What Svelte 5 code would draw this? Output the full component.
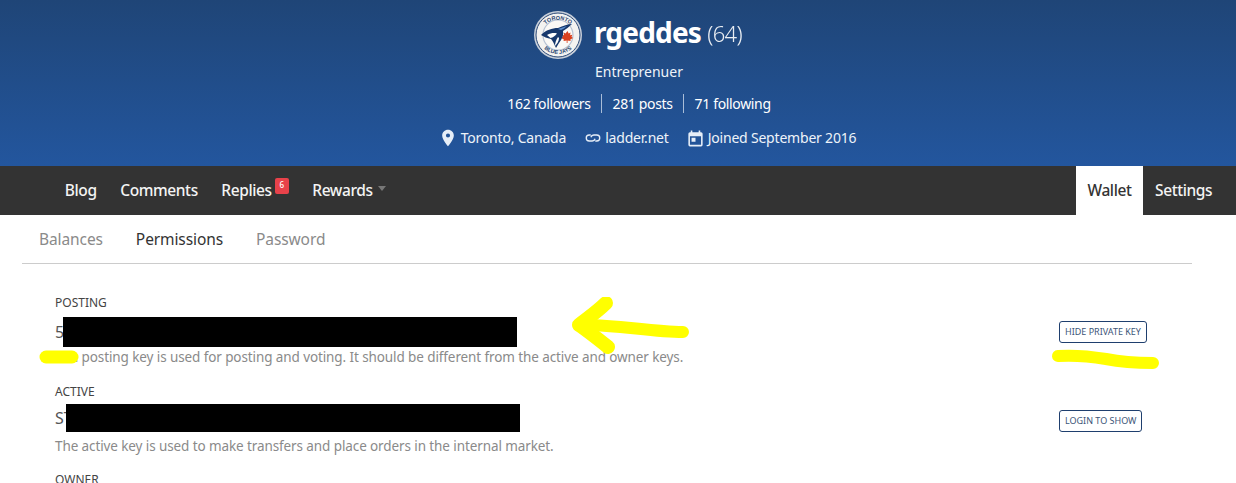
<script>
  const tabs = ['Blog', 'Comments', 'Replies', 'Rewards'];
  const subTabs = ['Balances', 'Permissions', 'Password'];
  const keys = [
    {
      label: 'POSTING',
      prefix: '5',
      desc: 'The posting key is used for posting and voting. It should be different from the active and owner keys.',
      action: 'HIDE PRIVATE KEY'
    },
    {
      label: 'ACTIVE',
      prefix: 'ST',
      desc: 'The active key is used to make transfers and place orders in the internal market.',
      action: 'LOGIN TO SHOW'
    }
  ];
</script>

<div class="page">
  <header class="hero">
    <div class="title">
      <svg class="avatar" viewBox="0 0 48 48" width="48" height="48">
        <defs>
          <path id="arcTop" d="M6.500 26a17.500 17.500 0 0 1 35 0" />
          <path id="arcBottom" d="M4 27a20.500 20.500 0 0 0 40 0" />
        </defs>
        <circle cx="24" cy="24" r="24" fill="#c9d0da" />
        <circle cx="24" cy="24" r="22" fill="#f4f3f1" stroke="#2c4a78" stroke-width="1" />
        <circle cx="24" cy="24" r="15" fill="#fbf9f6" stroke="#b7c2d3" stroke-width="1.200" />
        <text class="ring" fill="#27436f"><textPath href="#arcTop" startOffset="50%" text-anchor="middle">TORONTO</textPath></text>
        <text class="ring" fill="#27436f"><textPath href="#arcBottom" startOffset="50%" text-anchor="middle">BLUE JAYS</textPath></text>
        <path d="M33.500 20l1.200 2.400 1.800-.8-.4 2.600 2.200-.4-.8 2 1.500 1.200-2.700 1.400.4 1.600-3.200-.5v2.500h-.8v-2.500l-3.200.5.400-1.600-2.700-1.400 1.500-1.200-.8-2 2.200.4-.4-2.600 1.800.8z" fill="#d9411e" />
        <path d="M7 24c5-5 11-7 17-7 5-2 10-4 14-4-3 3-6 5-9 7 1 4-1 8-4 12l-3 5c-2-4-3-7-5-9-4-1-7-2-10-4z" fill="#17386c" />
        <path d="M13 24c4-2 7-2.500 10-1.500-2 2.500-4 4-6.500 4.500z" fill="#fff" />
        <path d="M24 18c3-1 6-2 9-3-2 2-4 3-6 4z" fill="#5d8fd0" />
        <path d="M21 35c0-3 1-6 3-9l1 1c0 3-2 6-4 8z" fill="#fff" />
      </svg>
      <span class="name">rgeddes</span>
      <span class="rep">(64)</span>
    </div>
    <div class="about">Entreprenuer</div>
    <div class="stats">
      <span>162 followers</span>
      <span>281 posts</span>
      <span>71 following</span>
    </div>
    <div class="meta">
      <span class="meta-item first">
        <svg viewBox="0 0 24 24" width="20" height="20"><path d="M12 2C8.100 2 5 5.100 5 9c0 5.200 7 13 7 13s7-7.800 7-13c0-3.900-3.100-7-7-7zm0 9.500a2.500 2.500 0 1 1 0-5 2.500 2.500 0 0 1 0 5z" fill="#e6eef8" /></svg>
        Toronto, Canada
      </span>
      <span class="meta-item">
        <svg viewBox="0 0 24 24" width="18" height="18"><path d="M9 8H7a4 4 0 0 0 0 8h4a4 4 0 0 0 3.800-3M15 16h2a4 4 0 0 0 0-8h-4a4 4 0 0 0-3.800 3" fill="none" stroke="#e6eef8" stroke-width="1.800" /></svg>
        ladder.net
      </span>
      <span class="meta-item">
        <svg viewBox="0 0 24 24" width="19" height="19"><path d="M19 4h-1V2h-2v2H8V2H6v2H5a2 2 0 0 0-2 2v14a2 2 0 0 0 2 2h14a2 2 0 0 0 2-2V6a2 2 0 0 0-2-2zm0 16H5V9h14v11zM7 11h5v5H7z" fill="#e6eef8" /></svg>
        Joined September 2016
      </span>
    </div>
  </header>

  <nav class="topnav">
    <div class="tabs">
      {#each tabs as tab}
        <a class="tab">
          {tab}
          {#if tab === 'Replies'}<span class="badge">6</span>{/if}
          {#if tab === 'Rewards'}<span class="caret"></span>{/if}
        </a>
      {/each}
    </div>
    <div class="tabs">
      <a class="tab active">Wallet</a>
      <a class="tab">Settings</a>
    </div>
  </nav>

  <div class="subnav">
    {#each subTabs as sub}
      <a class="sub" class:current={sub === 'Permissions'}>{sub}</a>
    {/each}
  </div>

  <section class="keys">
    {#each keys as key}
      <div class="key">
        <div>
          <div class="label">{key.label}</div>
          <div class="value">{key.prefix}<span class="mask"></span></div>
          <div class="desc">{key.desc}</div>
        </div>
        <div><button class="action">{key.action}</button></div>
      </div>
    {/each}
    <div class="label">OWNER</div>
  </section>

  <!-- marker scribbles on top of the page -->
  <svg class="scribbles" viewBox="0 0 1236 483" width="1236" height="483">
    <g fill="none" stroke="#ffff00" stroke-linecap="round" stroke-linejoin="round" filter="url(#soft)">
      <path d="M46 357h26" stroke-width="13" />
      <path d="M606 303c-8 8-18 15-27 22 9 6 19 14 29 22" stroke-width="14" />
      <path d="M580 325c35-1 70 7 103 7" stroke-width="12" />
      <path d="M1058 356c15-1 30 0 48 3 15 3 30 4 47 4" stroke-width="12" />
    </g>
    <defs>
      <filter id="soft"><feGaussianBlur stdDeviation="0.7" /></filter>
    </defs>
  </svg>
</div>

<style>
  :global(body) {
    margin: 0;
    background: #fff;
  }

  .page {
    position: relative;
    width: 1236px;
    height: 483px;
    overflow: hidden;
    font-family: "Noto Sans", "Liberation Sans", sans-serif;
    color: #333;
  }

  .hero {
    height: 166px;
    box-sizing: border-box;
    padding: 11px 0 0 42px;
    background: linear-gradient(#1f4577, #23569e);
    color: #fff;
    display: flex;
    flex-direction: column;
    align-items: center;
  }

  .title {
    display: flex;
    align-items: center;
    height: 48px;
    margin-left: -2px;
  }

  .avatar {
    margin-right: 12px;
  }

  .ring {
    font-size: 5.500px;
    font-weight: 700;
    font-family: "Liberation Sans", sans-serif;
  }

  .name {
    font-size: 28px;
    font-weight: 700;
    margin: 0 6px 7px 0;
    line-height: 44px;
    letter-spacing: -0.8px;
  }

  .rep {
    font-size: 22px;
    font-weight: 300;
    letter-spacing: -0.6px;
    margin-bottom: 4px;
    opacity: 0.9;
  }

  .about {
    margin-top: 3px;
    font-size: 14px;
    line-height: 20px;
    color: #eef3f9;
  }

  .stats {
    display: flex;
    margin-top: 12px;
    font-size: 14px;
    line-height: 19px;
  }

  .stats span {
    padding: 0 10.500px;
    border-left: 1px solid #a9bdd8;
    letter-spacing: -0.35px;
  }

  .stats span:first-child {
    border-left: 0;
  }

  .meta {
    display: flex;
    gap: 17px;
    margin-top: 15px;
    padding-left: 16px;
    font-size: 14px;
    line-height: 20px;
    letter-spacing: -0.2px;
    color: #eef3f9;
  }

  .meta-item {
    display: flex;
    align-items: center;
    gap: 3px;
  }

  .meta-item.first {
    margin-right: 1px;
  }

  .topnav {
    height: 49px;
    background: #333;
    display: flex;
    justify-content: space-between;
    padding-left: 53px;
    padding-right: 12px;
  }

  .tabs {
    display: flex;
  }

  .tab {
    display: flex;
    align-items: center;
    padding: 0 11.800px 2px;
    font-size: 15.500px;
    font-weight: 500;
    letter-spacing: -0.4px;
    color: #f4f4f4;
  }

  .tab.active {
    background: #fff;
    color: #333;
  }

  .badge {
    align-self: flex-start;
    margin: 12px 0 0 3px;
    width: 14px;
    height: 16px;
    border-radius: 2px;
    background: #e8424a;
    color: #fff;
    font-size: 8px;
    line-height: 14px;
    text-align: center;
  }

  .caret {
    margin-left: 5px;
    margin-bottom: 2px;
    border: 4.500px solid transparent;
    border-top: 5px solid #777;
    border-bottom: 0;
  }

  .subnav {
    margin: 0 44px 0 22px;
    height: 48px;
    border-bottom: 1px solid #ccc;
    display: flex;
    align-items: center;
    gap: 33px;
    padding-left: 17px;
    font-size: 15.500px;
    letter-spacing: -0.1px;
  }

  .sub {
    color: #8a8a8a;
  }

  .sub.current {
    color: #333;
  }

  .keys {
    padding: 31px 0 0 55px;
  }

  .key {
    display: grid;
    grid-template-columns: 1004px auto;
    margin-bottom: 17px;
  }

  .key + .key {
    margin-bottom: 16px;
  }

  .label {
    font-size: 12px;
    line-height: 16px;
    color: #444;
  }

  .value {
    display: flex;
    margin-top: 6px;
    font-size: 16px;
    line-height: 30px;
    color: #555;
  }

  .mask {
    display: block;
    width: 454px;
    height: 30px;
    margin-left: -1px;
    background: #000;
  }

  .key + .key .value {
    margin-top: 4px;
    line-height: 28px;
  }

  .key + .key .mask {
    height: 28px;
    margin-left: -7px;
  }

  .desc {
    font-size: 13.500px;
    line-height: 20px;
    letter-spacing: -0.1px;
    color: #8a8a8a;
  }

  .key + .key .desc {
    margin-top: 4px;
  }

  .action {
    margin-top: 26px;
    height: 22px;
    padding: 0 5px;
    background: #fff;
    border: 1px solid #1f3f6e;
    border-radius: 3px;
    color: #3c5578;
    font-family: inherit;
    font-size: 9px;
    line-height: 20px;
  }

  .scribbles {
    position: absolute;
    left: 0;
    top: 0;
    pointer-events: none;
  }
</style>
